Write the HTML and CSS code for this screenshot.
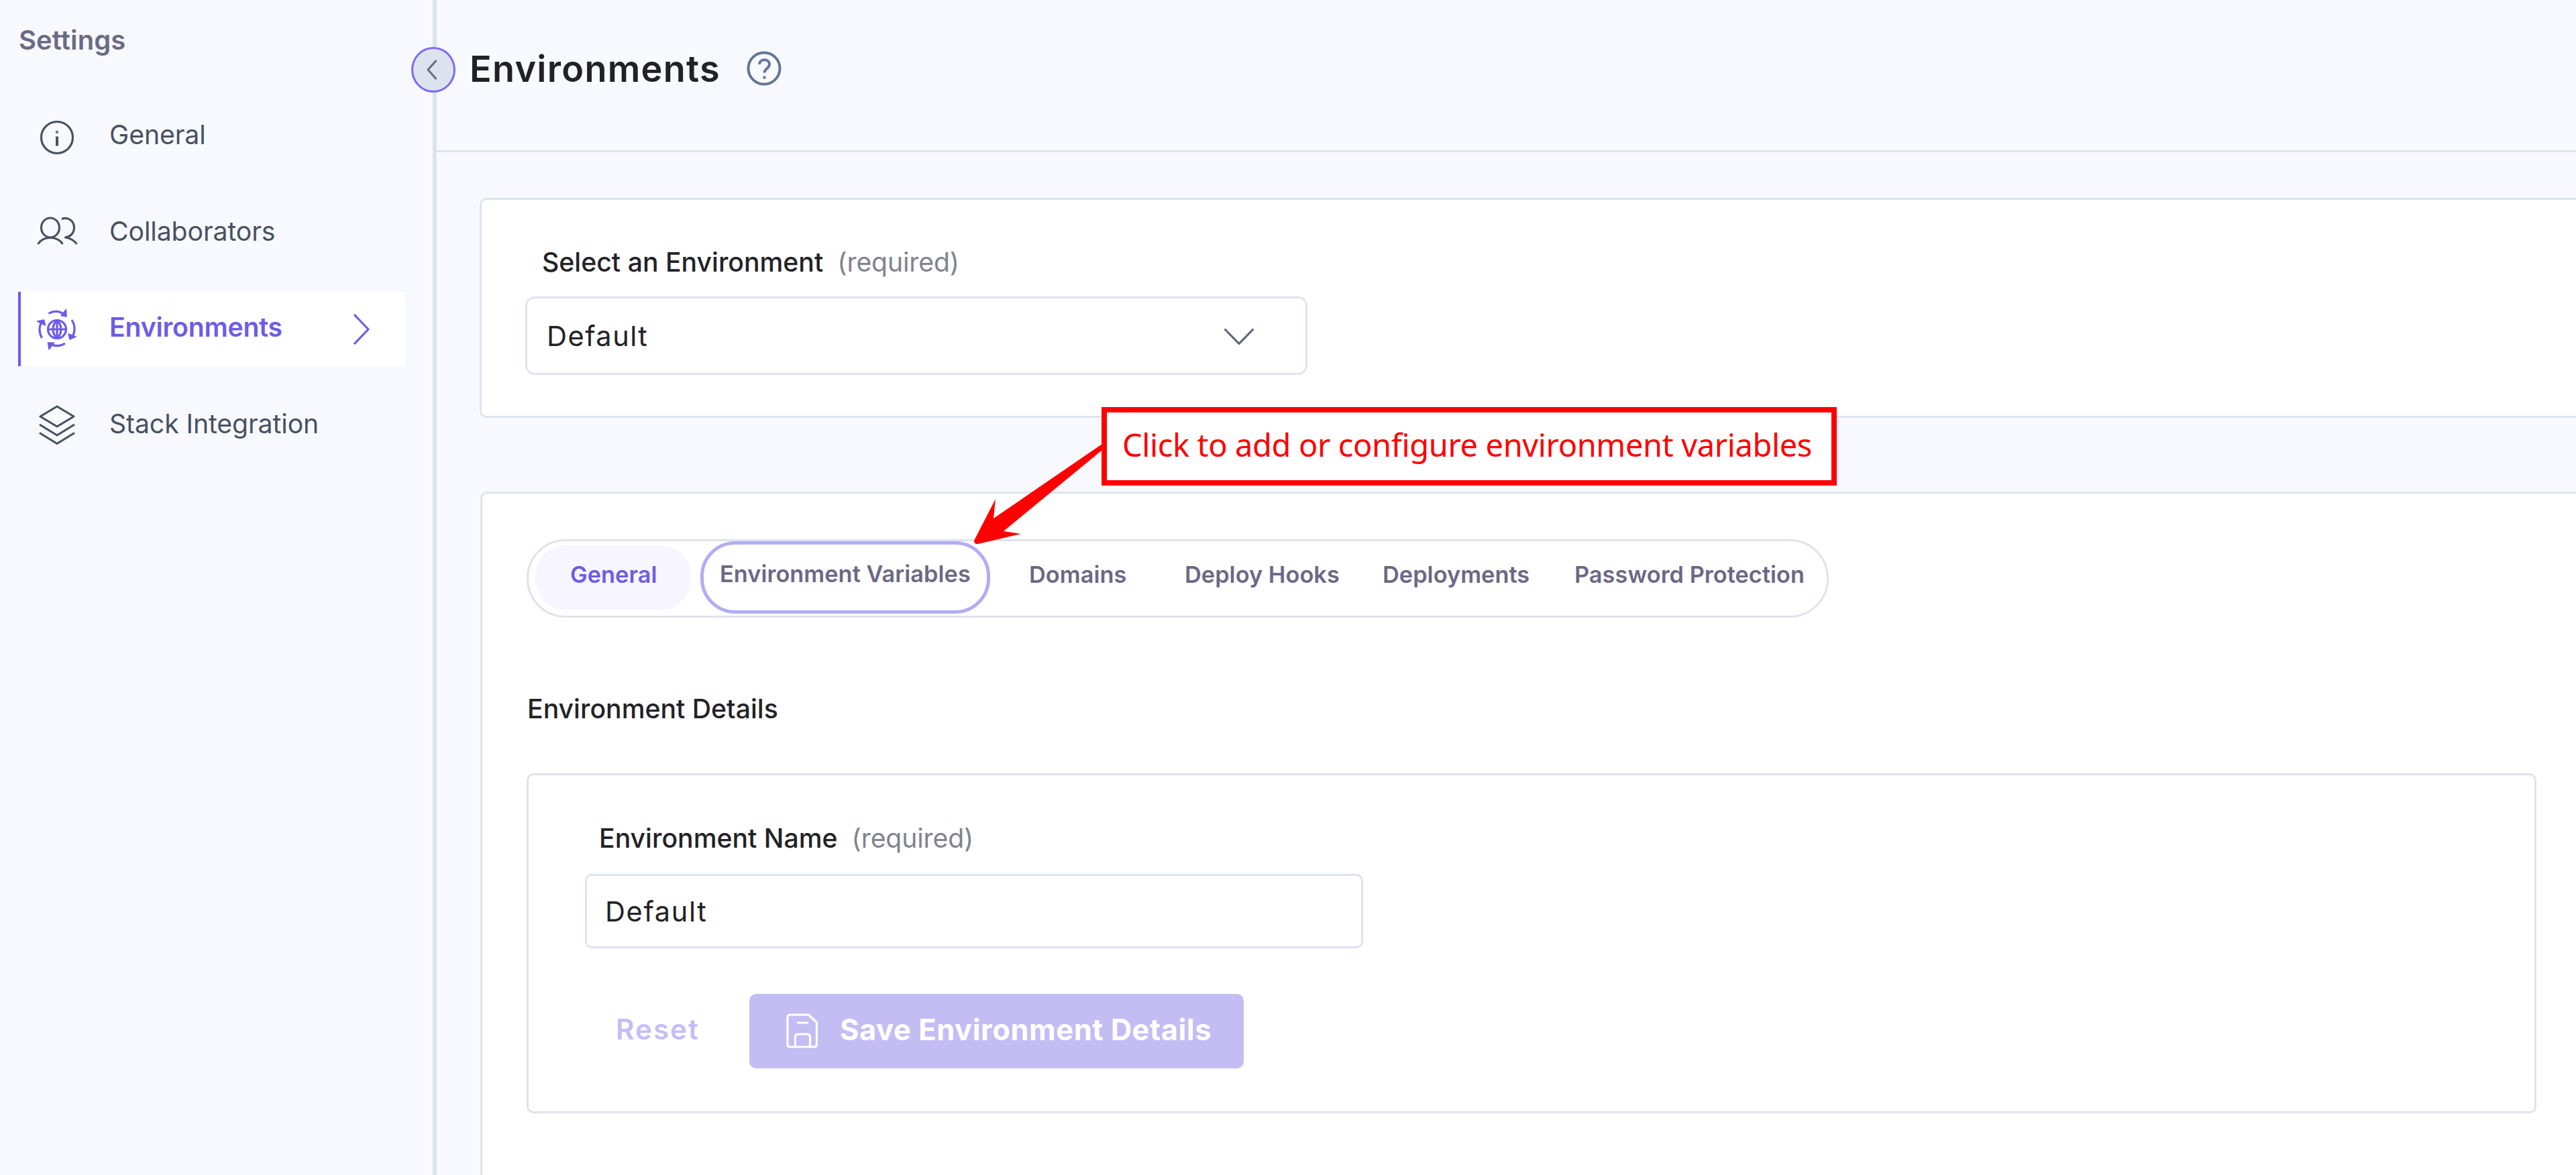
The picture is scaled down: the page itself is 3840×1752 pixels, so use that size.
FILE: index.html
```
<!DOCTYPE html>
<html lang="en">
<head>
<meta charset="utf-8">
<title>Environments</title>
<link rel="stylesheet" href="styles.css">
</head>
<body>
<div class="app">
  <aside class="sidebar">
    <h2 class="sidebar-title">Settings</h2>
    <nav class="nav">
      <a class="nav-item">
        <svg class="nav-icon" viewBox="0 0 64 64"><circle cx="32" cy="33" r="23.5"/><path d="M32 31.500v14" stroke-width="4"/><path d="M32 23v4" stroke-width="4" opacity=".75"/></svg>
        <span class="nav-label">General</span>
      </a>
      <a class="nav-item">
        <svg class="nav-icon" viewBox="0 0 64 64"><ellipse cx="22" cy="24.500" rx="13.500" ry="14.500"/><path d="M3.500 49C8 42 14 39.500 22 39.500S36 42 40.500 49M39 11.500c10-3.500 18.500 3 18.500 13 0 8-5.500 13.500-13 14.500 8 1.500 13 4 17 10"/></svg>
        <span class="nav-label">Collaborators</span>
      </a>
      <a class="nav-item nav-item-active">
        <svg class="nav-icon" viewBox="0 0 64 64"><circle cx="32" cy="32" r="13.500"/><path d="M18.500 32h27M32 18.500v27M32 18.500c-8 8-8 19 0 27M32 18.500c8 8 8 19 0 27"/><path d="M19.500 8.500C26 4.500 35 4 42 9.500M54 18c5 8 5.500 17 .5 26M44 53c-7 4.500-15 4.500-22 1M9.500 45C5 37 5 28 9.500 20"/><path d="M45.500 2.500 46 13l-8-1.500zM60 43l-9 4-2-8zM20 62l-1.500-10 9 0zM2.500 20l10-2 2 8z" fill="currentColor" stroke-width="1.500"/></svg>
        <span class="nav-label">Environments</span>
        <svg class="nav-chevron" viewBox="0 0 28 50"><path d="M3 3l21 22L3 47"/></svg>
      </a>
      <a class="nav-item">
        <svg class="nav-icon" viewBox="0 0 64 64"><path d="M32 4l25 15-25 15L7 19zM6 31l26 16 26-16M6 43.500l26 16 26-16"/></svg>
        <span class="nav-label">Stack Integration</span>
      </a>
    </nav>
    <button class="collapse" aria-label="Collapse"><svg viewBox="0 0 16 30"><path d="M14.500 1L2 15l12.500 14"/></svg></button>
  </aside>

  <main class="main">
    <header class="header">
      <h1 class="title">Environments</h1>
      <svg class="help" viewBox="0 0 52 52"><circle cx="26" cy="26" r="23.500"/><path d="M19 20c0-9 15-9 15 0 0 6-7.500 6-7.500 12.500"/><path d="M26.500 37.500v4"/></svg>
    </header>

    <div class="content">
      <section class="card selector">
        <div class="label">Select an Environment<span class="required">(required)</span></div>
        <div class="select">
          <span>Default</span>
          <svg class="select-chevron" viewBox="0 0 48 28"><path d="M2.500 2.500L24 24.500 45.500 2.500"/></svg>
        </div>
      </section>

      <section class="card details">
        <div class="tabs">
          <div class="tab tab-active">General</div>
          <div class="tab tab-focus">Environment Variables</div>
          <div class="tab">Domains</div>
          <div class="tab">Deploy Hooks</div>
          <div class="tab">Deployments</div>
          <div class="tab">Password Protection</div>
        </div>
        <h3 class="section-title">Environment Details</h3>
        <div class="panel">
          <div class="label">Environment Name<span class="required">(required)</span></div>
          <div class="input">Default</div>
          <div class="actions">
            <div class="reset">Reset</div>
            <div class="save">
              <svg class="save-icon" viewBox="0 0 48 52"><path d="M6 2h27l12.500 11.500V46q0 4-4 4H6q-4 0-4-4V6q0-4 4-4zM13.500 50V35q0-4 4-4h14q4 0 4 4v15M16 14h17"/></svg>
              <span>Save Environment Details</span>
            </div>
          </div>
        </div>
      </section>
    </div>
  </main>

  <svg class="arrow" viewBox="0 0 200 160"><path d="M194 10L32 121l3-29L3 154q0 6 6 5l64-15-26-4L194 19z"/></svg>
  <div class="callout">Click to add or configure environment variables</div>
</div>
</body>
</html>
```
FILE: styles.css
```
* { box-sizing: border-box; }

body {
  margin: 0;
  background: #f8f9fe;
  color: #222226;
  font-family: Inter, "Liberation Sans", sans-serif;
  font-size: 39.2px;
  line-height: 48px;
}

h1, h2, h3 { margin: 0; font-size: inherit; }

svg {
  display: block;
  flex: none;
  fill: none;
  stroke: currentColor;
  stroke-width: 3.2;
  stroke-linejoin: round;
}

.app {
  position: relative;
  display: flex;
  height: 1752px;
  overflow: hidden;
}

/* Sidebar */
.sidebar {
  position: relative;
  flex: none;
  width: 651px;
  padding: 36px 41px 0 27px;
  border-right: 6px solid #dde3ee;
}

.sidebar-title {
  padding-left: 1px;
  color: #6b6a85;
  font-size: 40px;
  font-weight: 600;
  letter-spacing: 0.1px;
}

.nav {
  display: flex;
  flex-direction: column;
  gap: 32.6px;
  margin-top: 64px;
  color: #475161;
  letter-spacing: -0.1px;
}

.nav-item {
  display: flex;
  align-items: center;
  height: 111px;
  padding-left: 26px;
}

.nav-icon { width: 64px; height: 64px; }

.nav-label {
  margin-left: 46px;
  padding-bottom: 5px;
}

.nav-item-active {
  padding-left: 22px;
  border-left: 4px solid #6c5ce7;
  background: #fff;
  color: #6c5ce7;
  font-weight: 600;
  letter-spacing: -0.2px;
}

.nav-chevron {
  width: 28px;
  height: 50px;
  margin-left: auto;
  margin-right: 51px;
}

.collapse {
  position: absolute;
  top: 70px;
  left: 613px;
  z-index: 1;
  display: flex;
  align-items: center;
  justify-content: center;
  width: 66px;
  height: 68px;
  padding: 0 5px 0 0;
  border: 3px solid #7b6bef;
  border-radius: 50%;
  background: #dde3ee;
  color: #6a7080;
}

.collapse svg { width: 16px; height: 30px; }

/* Page header */
.main { flex: 1; min-width: 0; }

.header {
  display: flex;
  align-items: center;
  height: 227px;
  padding: 0 0 18px 49px;
  border-bottom: 3px solid #dde3ee;
}

.title {
  font-size: 54px;
  font-weight: 600;
  letter-spacing: 1.27px;
}

.help {
  width: 52px;
  height: 52px;
  margin: 0 0 3px 39px;
  color: #647696;
  stroke-width: 4;
}

/* Cards */
.content {
  display: flex;
  flex-direction: column;
  gap: 110px;
  padding: 68px 0 0 64px;
}

.card {
  border: 3px solid #dde3ee;
  border-right: 0;
  border-radius: 10px 0 0 10px;
  background: #fff;
}

.selector {
  height: 328px;
  padding: 69px 65px 0;
}

.label {
  padding-left: 25px;
  font-weight: 500;
}

.required {
  margin-left: 21px;
  color: #7f838d;
  font-weight: 400;
  letter-spacing: -0.15px;
}

.select {
  display: flex;
  align-items: center;
  justify-content: space-between;
  width: 1166px;
  height: 117px;
  margin-top: 27px;
  padding: 0 75px 0 29px;
  border: 3px solid #dfe5ef;
  border-radius: 14px;
  font-size: 41.5px;
  letter-spacing: 1.5px;
}

.select-chevron {
  width: 48px;
  height: 28px;
  margin-top: 2px;
  color: #5f6878;
}

.details {
  height: 1030px;
  margin-left: 1px;
  padding: 68px 59px 0 66px;
  border-radius: 10px 0 0 0;
}

/* Tabs */
.tabs {
  display: grid;
  grid-template-columns: 246px 490px 232px 295px 286px auto;
  align-items: center;
  width: 1941px;
  height: 117px;
  padding-left: 10px;
  border: 3px solid #dde3ee;
  border-radius: 58px;
  color: #6b6885;
  font-size: 34.3px;
  font-weight: 600;
  letter-spacing: 0.05px;
}

.tab {
  padding-bottom: 13px;
  white-space: nowrap;
}

.tab-active {
  width: 232px;
  height: 97px;
  margin-bottom: 4px;
  padding: 20px 0 0 52px;
  border-radius: 46px;
  background: #f7f5ff;
  color: #6c5ce7;
}

.tab-focus {
  width: 432px;
  height: 108px;
  margin-bottom: 4px;
  padding: 20px 0 0 24px;
  border: 5px solid #b5abf3;
  border-radius: 52px;
}

.section-title {
  margin-top: 112px;
  padding-left: 1px;
  font-weight: 500;
}

/* Environment form */
.panel {
  height: 507px;
  margin-top: 72px;
  padding: 70px 84px 0;
  border: 3px solid #dde3ee;
  border-radius: 10px;
}

.panel .label { padding-left: 21px; }

.input {
  display: flex;
  align-items: center;
  width: 1160px;
  height: 111px;
  margin-top: 29px;
  padding-left: 27px;
  border: 3px solid #dde3ee;
  border-radius: 10px;
  font-size: 41.5px;
  letter-spacing: 1.65px;
}

.actions {
  display: flex;
  height: 111px;
  margin-top: 68px;
  line-height: 106px;
}

.reset {
  width: 245px;
  padding-left: 46px;
  color: #c5bdf6;
  font-size: 42px;
  font-weight: 600;
  letter-spacing: 2.1px;
}

.save {
  display: flex;
  width: 737px;
  padding-left: 55px;
  border-radius: 10px;
  background: #c4bdf3;
  color: #fff;
  font-size: 43.5px;
  font-weight: 700;
  letter-spacing: 0.54px;
}

.save-icon {
  width: 48px;
  height: 52px;
  margin: 29px 32px 0 0;
}

/* Annotation */
.arrow {
  position: absolute;
  left: 1449px;
  top: 652px;
  width: 200px;
  height: 160px;
  fill: #f00;
  stroke: none;
}

.callout {
  position: absolute;
  left: 1642px;
  top: 607px;
  width: 1096px;
  height: 117px;
  padding-left: 23px;
  border: 8px solid #f00;
  background: #fff;
  color: #f00;
  font-family: "Noto Sans", sans-serif;
  font-size: 47px;
  line-height: 97px;
  letter-spacing: -0.38px;
  white-space: nowrap;
}
```
